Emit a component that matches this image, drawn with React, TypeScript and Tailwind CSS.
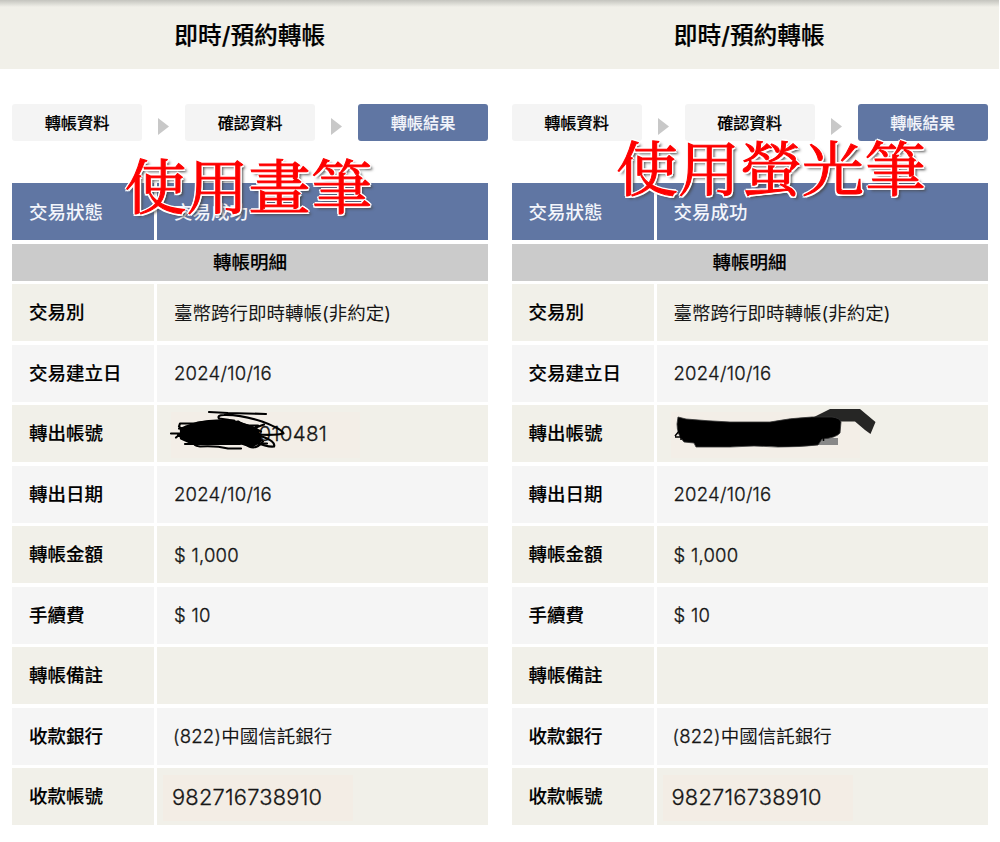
import clsx from "clsx";
import type { ReactNode } from "react";

function BrushScribble() {
  return (
    <svg
      className="absolute left-0 top-0"
      width="230"
      height="57"
      viewBox="157 405.500 230 57"
      fill="none"
      stroke="#000"
      strokeWidth="2.2"
      strokeLinecap="round"
      strokeLinejoin="round"
    >
      <path
        d="M186 427 L198 423 Q218 420 238 423 L256 429 Q261 436 260 442 L252 447 Q244 445 238 443 L218 444 L190 443 L181 439 L181 430 Z"
        fill="#000"
      />
      <path d="M209 412.500 L228 413.500 L266 414.500" />
      <path d="M219 419 Q217 415.500 224 415.500 Q240 415 262 422 Q283 430 283.500 434 Q277 436 256 435 M219 419 Q240 421 261 432" />
      <path d="M179 427 L180 424 H200 M196 424 Q210 420 234 421 M179 429 Q205 424 246 430 M171 434 H182 M176 438 L187 429 M184 438 L180 428 M178 436 L194 442" />
      <path d="M185 444.500 H240 M196 443 Q192 446 200 447 Q216 446 228 449 H241 M207 441 Q238 438 249 447 Q256 450 262 443 M242 444 H267" />
      <path d="M262 437 Q276 442 274 447 Q268 448 254 442 M244 427 L263 442 M246 426 H258 L250 433 M256 428 L264 425 M238 422 L254 432 M235 432 L262 437" />
    </svg>
  );
}

function HighlighterScribble() {
  return (
    <svg
      className="absolute left-0 top-0"
      width="240"
      height="57"
      viewBox="657 405 240 57"
    >
      <path d="M817 438 H838 V445 H818 Z" fill="#888" />
      <path
        d="M812 418 Q822 413 830 409 H860 L875.500 422 L870.500 434 L865 430 L855 421.500 H838 L818 429 Z"
        fill="#262625"
      />
      <path
        d="M678 417 L686 419 Q708 421 730 422 L770 422 Q790 418 812 417 L832 417 Q840 418 841 422 L840 433 Q836 438 822 439 L818 445 Q800 447 778 447 Q754 445 730 447 L696 447 L694 443 L684 442 Q677 435 677 424 Z"
        fill="#000"
        stroke="#333"
        strokeWidth="0.8"
      />
      <path
        d="M675 436 L680 430 M675 437 H682 M681 430 V440 M823.500 436 V441"
        stroke="#000"
        strokeWidth="1.5"
      />
    </svg>
  );
}

function Step({ label, active }: { label: string; active?: boolean }) {
  return (
    <div
      className={clsx(
        "flex h-[37px] w-[130px] items-center justify-center rounded-[3px] pt-px text-[16.200px] font-medium [-webkit-text-stroke-width:0.15px]",
        active ? "bg-[#6076a3] text-[#f3f5fb]" : "bg-[#f4f4f4] text-black"
      )}
    >
      {label}
    </div>
  );
}

function Arrow() {
  return (
    <div className="flex w-[43px] justify-center pt-[8px]">
      <svg width="11" height="17" viewBox="0 0 11 17">
        <path d="M0 0 L11 8.500 L0 17 Z" fill="#c8c8c8" />
      </svg>
    </div>
  );
}

type RowProps = { label: string; even?: boolean; children?: ReactNode };

function Row({ label, even, children }: RowProps) {
  const bg = even ? "bg-[#f5f5f5]" : "bg-[#f1f0e9]";
  return (
    <div className="flex h-[57px] gap-[3px] text-black">
      <div
        className={clsx(
          "flex w-[142px] items-center pl-[17px] pt-[1.500px] text-[18.500px] font-medium [-webkit-text-stroke-width:0.15px]",
          bg
        )}
      >
        {label}
      </div>
      <div
        className={clsx(
          "relative flex flex-1 items-center pl-[17px] pt-[2px] text-[18.500px] text-[#161616]",
          bg
        )}
      >
        {children}
      </div>
    </div>
  );
}

function Digits({ children }: { children: ReactNode }) {
  return (
    <span className="font-light tracking-[0.25px] [-webkit-text-stroke-width:0.3px]">
      {children}
    </span>
  );
}

type PanelProps = { note: string; noteClass: string; account: ReactNode };

function Panel({ note, noteClass, account }: PanelProps) {
  return (
    <section className="relative h-[842px] w-[499.500px]">
      <header className="flex h-[69px] items-center justify-center bg-[#f1f0e9] bg-linear-to-b from-[#c4c4be] to-[#f1f0e9] to-[7px] pt-[2px] text-[23.700px] font-medium text-black [-webkit-text-stroke-width:0.2px]">
        即時/預約轉帳
      </header>

      <div className="flex items-center pl-3 pt-[35px]">
        <Step label="轉帳資料" />
        <Arrow />
        <Step label="確認資料" />
        <Arrow />
        <Step label="轉帳結果" active />
      </div>

      <div className="ml-3 mt-[42px] flex w-[476px] flex-col gap-[3.500px]">
        <div className="flex h-[57px] gap-[3px] text-[18.500px] font-medium text-[#f3f5fb]">
          <div className="flex w-[142px] items-center bg-[#6076a3] pl-[17px] pt-[2px]">
            交易狀態
          </div>
          <div className="flex flex-1 items-center bg-[#6076a3] pl-[17px] pt-[2px]">
            交易成功
          </div>
        </div>
        <div className="flex h-[37px] items-center justify-center bg-[#cbcbcb] pt-px text-[18.500px] font-medium text-black [-webkit-text-stroke-width:0.15px]">
          轉帳明細
        </div>
        <Row label="交易別">臺幣跨行即時轉帳(非約定)</Row>
        <Row label="交易建立日" even>
          <Digits>2024/10/16</Digits>
        </Row>
        <Row label="轉出帳號">{account}</Row>
        <Row label="轉出日期" even>
          <Digits>2024/10/16</Digits>
        </Row>
        <Row label="轉帳金額">
          <Digits>$ 1,000</Digits>
        </Row>
        <Row label="手續費" even>
          <Digits>$ 10</Digits>
        </Row>
        <Row label="轉帳備註" />
        <Row label="收款銀行" even>
          <span className="-ml-px">
            <Digits>(822)</Digits>中國信託銀行
          </span>
        </Row>
        <Row label="收款帳號">
          <span className="-ml-[11px] flex h-[46px] w-[190px] items-center bg-[#f3ede5] pl-[9px] text-[21.800px]">
            <Digits>982716738910</Digits>
          </span>
        </Row>
      </div>

      <div
        className={clsx(
          "absolute origin-top scale-y-[0.95] whitespace-nowrap font-['Noto_Serif_CJK_TC','Noto_Serif_TC','AR_PL_UMing_TW','Noto_Sans_CJK_TC',serif] text-[62px] leading-[62px] text-[#fe0000] [-webkit-text-stroke:1px_#fe0000] [text-shadow:2px_0_0_#fff,-2px_0_0_#fff,0_2px_0_#fff,0_-2px_0_#fff,1.5px_1.5px_0_#fff,-1.5px_1.5px_0_#fff,1.5px_-1.5px_0_#fff,-1.5px_-1.5px_0_#fff,3px_3px_3px_#444]",
          noteClass
        )}
      >
        {note}
      </div>
    </section>
  );
}

export default function App() {
  return (
    <main className="flex h-[842px] w-[1000px] overflow-hidden bg-white font-['Inter','Noto_Sans_CJK_TC',sans-serif]">
      <Panel
        note="使用畫筆"
        noteClass="left-[124.500px] top-[155px]"
        account={
          <>
            <span className="-ml-[3px] flex h-[46px] w-[189px] items-center bg-[#f3eee7] text-[20.500px]">
              <span className="w-[156px] text-right">
                <Digits>010481</Digits>
              </span>
            </span>
            <BrushScribble />
          </>
        }
      />
      <Panel
        note="使用螢光筆"
        noteClass="left-[116.500px] top-[137px]"
        account={
          <>
            <span className="-ml-[3px] h-[46px] w-[189px] bg-[#f3eee7]" />
            <HighlighterScribble />
          </>
        }
      />
    </main>
  );
}
